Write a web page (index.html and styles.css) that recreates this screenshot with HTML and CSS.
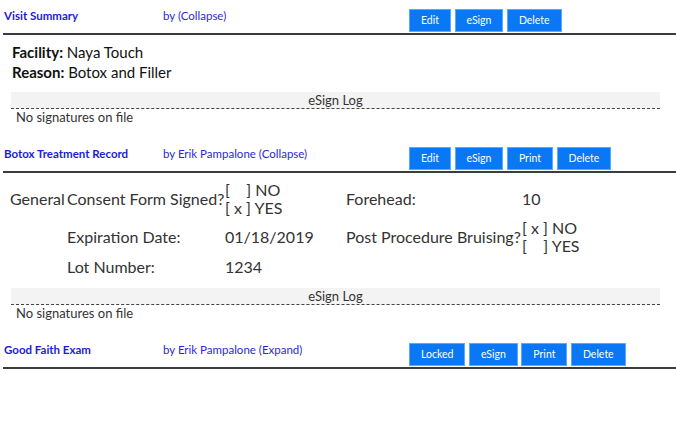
FILE: index.html
```html
<!DOCTYPE html>
<html>
<head>
<meta charset="utf-8">
<link rel="stylesheet" href="styles.css">
</head>
<body>
<div class="page">
  <section class="record">
    <div class="record-head">
      <a class="title">Visit Summary</a>
      <a class="by">by (Collapse)</a>
      <div class="actions">
        <button class="btn">Edit</button>
        <button class="btn">eSign</button>
        <button class="btn">Delete</button>
      </div>
    </div>
    <div class="visit-body">
      <div class="visit-line"><b>Facility:</b> Naya Touch</div>
      <div class="visit-line"><b>Reason:</b> Botox and Filler</div>
    </div>
    <div class="esign">
      <div class="esign-bar">eSign Log</div>
      <div class="esign-empty">No signatures on file</div>
    </div>
  </section>

  <section class="record">
    <div class="record-head">
      <a class="title">Botox Treatment Record</a>
      <a class="by">by Erik Pampalone (Collapse)</a>
      <div class="actions">
        <button class="btn">Edit</button>
        <button class="btn">eSign</button>
        <button class="btn">Print</button>
        <button class="btn">Delete</button>
      </div>
    </div>
    <div class="form-grid">
      <div class="cell">General</div>
      <div class="cell">Consent Form Signed?</div>
      <div class="cell"><span class="choices"><span>[&nbsp;&nbsp;&nbsp;&nbsp;] NO</span><span>[ x ] YES</span></span></div>
      <div class="cell">Forehead:</div>
      <div class="cell">10</div>

      <div class="cell"></div>
      <div class="cell">Expiration Date:</div>
      <div class="cell">01/18/2019</div>
      <div class="cell">Post Procedure Bruising?</div>
      <div class="cell"><span class="choices"><span>[ x ] NO</span><span>[&nbsp;&nbsp;&nbsp;&nbsp;] YES</span></span></div>

      <div class="cell"></div>
      <div class="cell">Lot Number:</div>
      <div class="cell">1234</div>
      <div class="cell"></div>
      <div class="cell"></div>
    </div>
    <div class="esign">
      <div class="esign-bar">eSign Log</div>
      <div class="esign-empty">No signatures on file</div>
    </div>
  </section>

  <section class="record">
    <div class="record-head">
      <a class="title">Good Faith Exam</a>
      <a class="by">by Erik Pampalone (Expand)</a>
      <div class="actions">
        <button class="btn">Locked</button>
        <button class="btn">eSign</button>
        <button class="btn">Print</button>
        <button class="btn">Delete</button>
      </div>
    </div>
  </section>
</div>
</body>
</html>
```

FILE: styles.css
```css
html, body {
  margin: 0;
  padding: 0;
  background: #ffffff;
}

body {
  font-family: Lato, "Open Sans", sans-serif;
  color: #222;
}

.page {
  display: flex;
  flex-direction: column;
  padding-left: 3px;
}

.record-head {
  display: grid;
  grid-template-columns: 160px 246px auto;
  align-items: start;
  border-bottom: 2px solid #3c3c3c;
  height: 33px;
  box-sizing: content-box;
}

.title {
  padding-left: 1px;
  margin-top: 8px;
  font-size: 11.5px;
  line-height: 16px;
  font-weight: 700;
  color: #1c1cd8;
}

.by {
  margin-top: 8px;
  font-size: 11.5px;
  line-height: 16px;
  color: #2a2ad0;
}

.actions {
  display: flex;
  gap: 3.5px;
  margin-top: 9px;
}

.btn {
  height: 23px;
  min-width: 41px;
  padding: 0 11px;
  border: 1px solid #5aa8ff;
  background: #0a78f5;
  color: #fff;
  font-family: Lato, sans-serif;
  font-size: 10.5px;
  line-height: 21px;
}

.visit-body {
  padding: 7px 0 0 9px;
  font-size: 15px;
  line-height: 20px;
  color: #111;
}

.visit-line b {
  font-weight: 700;
}

.esign {
  margin: 10px 16px 0 8px;
}

.esign-bar {
  background: #f3f3f3;
  border-bottom: 1px dashed #444;
  text-align: center;
  font-size: 13px;
  line-height: 16px;
  color: #333;
}

.esign-empty {
  padding-left: 5px;
  font-size: 13px;
  line-height: 17px;
  color: #333;
}

.record + .record {
  margin-top: 12px;
}

.form-grid {
  display: grid;
  grid-template-columns: 57px 158px 121px 176px auto;
  row-gap: 2px;
  padding: 8px 0 0 7px;
  font-size: 16px;
  line-height: 20px;
  color: #333;
  align-items: center;
}

.form-grid + .esign {
  margin-top: 11px;
}

.cell {
  white-space: nowrap;
}

.choices {
  display: inline-flex;
  flex-direction: column;
  vertical-align: middle;
  font-size: 16px;
  line-height: 18px;
}
```
